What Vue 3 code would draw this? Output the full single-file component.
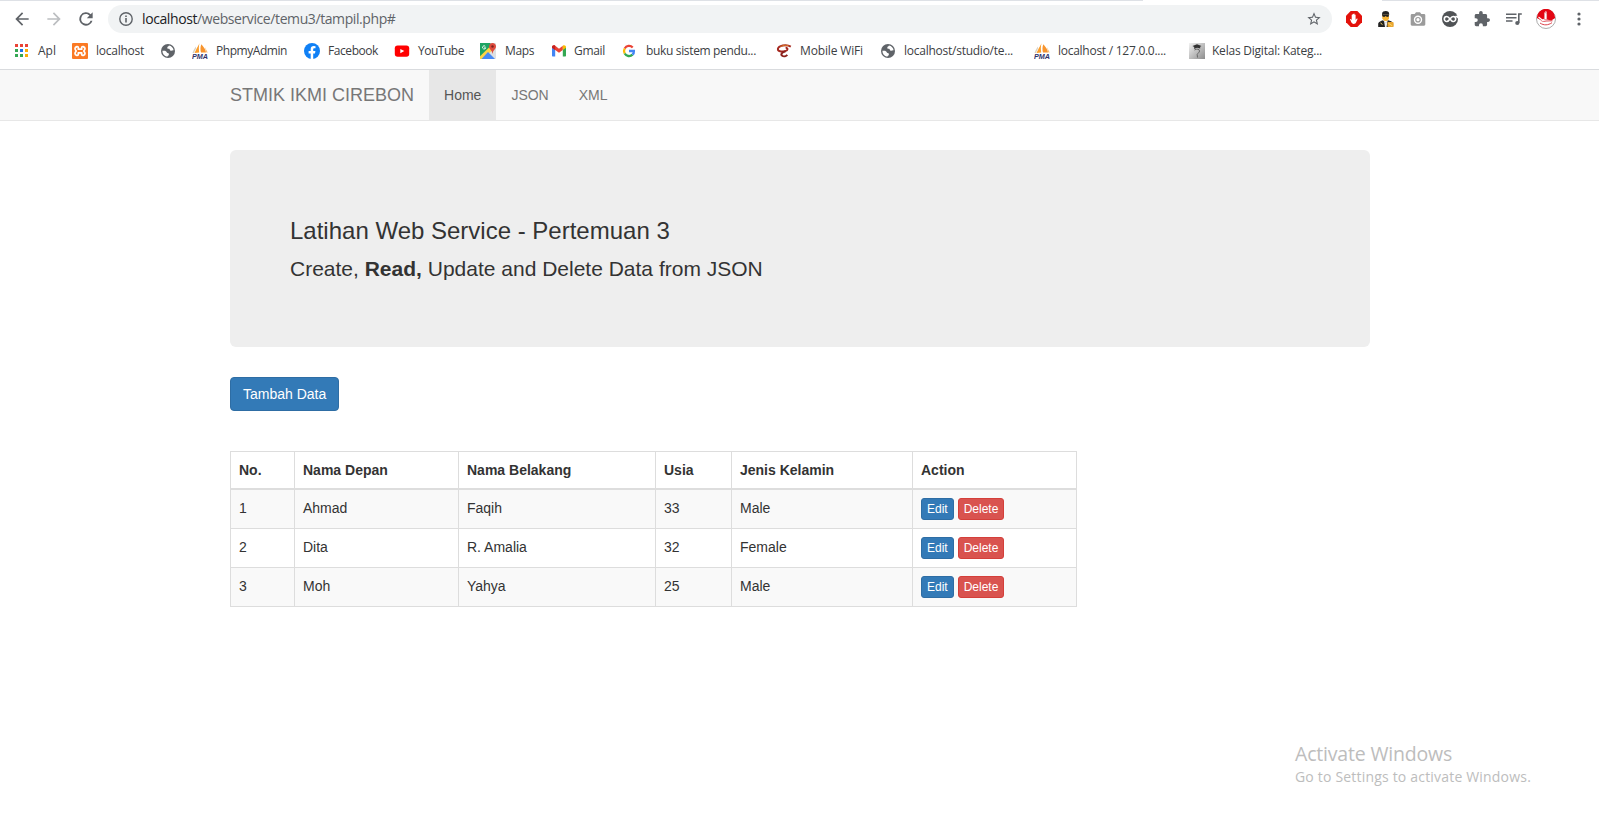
<script setup>
import { ref } from 'vue'

const ctx = document.createElement('canvas').getContext('2d')
function fit(text, width, size) {
  ctx.font = `${size}px "Open Sans"`
  const natural = ctx.measureText(text).width
  return { letterSpacing: (width - natural) / text.length + 'px', width: width + 'px' }
}

// gap: distance from the previous label; pad: space between icon and label
const bookmarks = [
  { icon: 'apps', label: 'Apl', gap: 13, w: 18, pad: 9 },
  { icon: 'xampp', label: 'localhost', gap: 16, w: 48, pad: 8 },
  { icon: 'globe', label: '', gap: 16, w: 0, pad: 0 },
  { icon: 'pma', label: 'PhpmyAdmin', gap: 16, w: 71, pad: 8 },
  { icon: 'fb', label: 'Facebook', gap: 17, w: 50, pad: 8 },
  { icon: 'yt', label: 'YouTube', gap: 16, w: 46, pad: 8 },
  { icon: 'maps', label: 'Maps', gap: 16, w: 29, pad: 9 },
  { icon: 'gmail', label: 'Gmail', gap: 17, w: 31, pad: 7 },
  { icon: 'google', label: 'buku sistem pendu...', gap: 16, w: 110, pad: 9 },
  { icon: 'wifi', label: 'Mobile WiFi', gap: 20, w: 63, pad: 8 },
  { icon: 'globe', label: 'localhost/studio/te...', gap: 17, w: 109, pad: 8 },
  { icon: 'pma', label: 'localhost / 127.0.0....', gap: 21, w: 108, pad: 8 },
  { icon: 'kelas', label: 'Kelas Digital: Kateg...', gap: 23, w: 110, pad: 7 }
]
const menu = ['Home', 'JSON', 'XML']
const active = ref('Home')
const columns = ['No.', 'Nama Depan', 'Nama Belakang', 'Usia', 'Jenis Kelamin', 'Action']
const rows = [
  ['1', 'Ahmad', 'Faqih', '33', 'Male'],
  ['2', 'Dita', 'R. Amalia', '32', 'Female'],
  ['3', 'Moh', 'Yahya', '25', 'Male']
]
</script>

<template>
  <div class="screen">
    <header class="chrome">
      <div class="tabline"><i></i><i></i></div>
      <div class="toolbar">
        <svg class="nav back" viewBox="0 0 24 24" fill="#5f6368"><path d="M20 11H7.8l5.6-5.6L12 4l-8 8 8 8 1.4-1.4L7.800 13H20z" /></svg>
        <svg class="nav forward" viewBox="0 0 24 24" fill="#bcbec1"><path d="M4 11h12.200l-5.600-5.600L12 4l8 8-8 8-1.400-1.400 5.600-5.600H4z" /></svg>
        <svg class="nav reload" viewBox="0 0 24 24" fill="#5f6368"><path d="M17.650 6.350A8 8 0 1 0 19.730 14h-2.300A5.800 5.800 0 1 1 12 6.100c1.600 0 3.100.7 4.100 1.800L13 11h7V4z" /></svg>
        <div class="omnibox">
          <svg class="info" viewBox="0 0 16 16"><circle cx="8" cy="8" r="6.200" fill="none" stroke="#5f6368" stroke-width="1.400" /><path d="M7.200 7h1.600v4.400H7.200zM7.200 4.400h1.600v1.500H7.200z" fill="#5f6368" /></svg>
          <span class="url" :style="fit('localhost/webservice/temu3/tampil.php#', 253.5, 14)"><b>localhost</b>/webservice/temu3/tampil.php#</span>
          <svg class="star" viewBox="0 0 24 24" fill="#5f6368"><path d="M22 9.240l-7.190-.62L12 2 9.190 8.630 2 9.240l5.460 4.730L5.820 21 12 17.270 18.180 21l-1.630-7.030zM12 15.400l-3.760 2.270 1-4.280-3.320-2.880 4.380-.38L12 6.100l1.710 4.040 4.380.38-3.320 2.880 1 4.280z" /></svg>
        </div>
        <div class="extensions">
          <svg viewBox="0 0 16 16"><path d="M4.700 0h6.600L16 4.700v6.600L11.300 16H4.700L0 11.300V4.700z" fill="#e3120b" /><path d="M4 8.300c.4-.6 1.100-.2 1.300.2l.4.7V4.100c0-.7.9-.7.9 0v3.200V3.200c0-.7 1-.7 1 0v4V3.100c0-.7 1-.7 1 0v4.200V4c0-.7 1-.7 1 0v5l1-1.200c.5-.5 1.200 0 .9.500l-1.500 3.200c-.5 1-1.200 1.400-2.200 1.400-1.400 0-2.100-.7-2.600-1.800z" fill="#fff" /></svg>
          <svg viewBox="0 0 16 16"><path d="M4.300 3.500h6.700v4.200L9.300 9.900H6.500L4.300 7.700z" fill="#f5b335" /><path d="M4.100 5V2.400C4.300.8 6 0 7.700 0c2.200 0 3.600 1 3.500 3.200v.6H5zM4.500 4h6.300v1.600L9 6 7.700 5l-1.500.9-1.700-.5zM.2 16v-3.500C.8 10.800 3 10 5 9.300l2.700 2.800 2.400-2.800c2 .5 4.500 1.200 5 3.200V16z" fill="#222" /><path d="M6 9.800l1.800 2 1.700-2L8.600 16H7z" fill="#eee" /><rect x="9.400" y="11" width="6.200" height="5" rx="1" fill="#eaa52e" /><path d="M10.500 12.300l3.800 2.500M2.500 12l2 1.600" stroke="#ffda69" /></svg>
          <svg viewBox="0 0 16 16"><path d="M2 3h2.700L6 1.300h4L11.300 3H14c.8 0 1.300.6 1.300 1.300v9c0 .8-.5 1.400-1.300 1.400H2c-.8 0-1.300-.6-1.300-1.400v-9C.7 3.600 1.200 3 2 3z" fill="#9b9b9b" /><circle cx="8" cy="8.700" r="3.500" fill="none" stroke="#fff" stroke-width="1.400" /><circle cx="8" cy="8.700" r="1.600" fill="#fff" /></svg>
          <svg viewBox="0 0 16 16"><circle cx="8" cy="8" r="8" fill="#505356" /><path d="M8 8C6.500 6 5.800 5.500 4.800 5.500a2.500 2.500 0 0 0 0 5C6 10.500 7 9.500 8 8s2-2.500 3.200-2.500a2.500 2.500 0 0 1 0 5C10.200 10.500 9.500 10 8 8z" fill="none" stroke="#fff" stroke-width="1.600" /><path d="M12.500 5l3.500-.5v3z" fill="#fff" /></svg>
          <svg viewBox="1 1 22 22" fill="#5f6368"><path d="M20.500 11H19V7c0-1.100-.9-2-2-2h-4V3.500a2.500 2.500 0 0 0-5 0V5H4c-1.100 0-2 .9-2 2v3.800h1.500a2.700 2.700 0 0 1 0 5.400H2V20c0 1.100.9 2 2 2h3.800v-1.500a2.700 2.700 0 0 1 5.400 0V22H17c1.100 0 2-.9 2-2v-4h1.500a2.500 2.500 0 0 0 0-5z" /></svg>
          <svg viewBox="0 0 16 16" fill="none" stroke="#5f6368"><path d="M0 3.300h10.500M0 6.700h10.500M0 10.100h6.500" stroke-width="1.500" /><path d="M12.800 12V3h3" stroke-width="1.600" /><circle cx="11.300" cy="12" r="2.100" fill="#5f6368" stroke="none" /></svg>
        </div>
        <svg class="avatar" viewBox="0 0 20 20"><circle cx="10" cy="10" r="9.500" fill="#fff" stroke="#888" stroke-width=".7" /><path d="M.8 9A9.200 9.200 0 0 1 19.200 9l-3.900 2.500-4.500-.9V3L9.800 1.900 8.200 4l-.3 6-3 1z" fill="#e30613" /><path d="M9.800 2.500L8.500 5v5.500h2.300V5z" fill="#fff" stroke="#d9303a" stroke-width=".5" /><path d="M3 9c2 3 4 4 7 3l6.500-.2M4 14c4 2.700 8 2.300 12-.3" fill="none" stroke="#d9303a" stroke-width=".9" /><path d="M2.500 8l5 4" stroke="#fff" stroke-width="1.200" /></svg>
        <svg class="kebab" viewBox="0 0 4 16" fill="#5f6368"><circle cx="2" cy="3" r="1.600" /><circle cx="2" cy="8" r="1.600" /><circle cx="2" cy="13" r="1.600" /></svg>
      </div>

      <nav class="bookmarks">
        <a v-for="(b, i) in bookmarks" :key="i" :style="{ marginLeft: b.gap + 'px', gap: b.pad + 'px' }">
          <svg v-if="b.icon === 'apps'" viewBox="0 0 16 16"><path d="M2 1h3v3H2zM7 1h3v3H7zM12 1h3v3h-3z" fill="#ea4335" /><path d="M2 6h3v3H2z" fill="#34a853" /><path d="M7 6h3v3H7z" fill="#1a73e8" /><path d="M12 6h3v3h-3zM12 11h3v3h-3z" fill="#fbad05" /><path d="M2 11h3v3H2zM7 11h3v3H7z" fill="#34a853" /></svg>
          <svg v-else-if="b.icon === 'xampp'" viewBox="0 0 16 16"><rect width="16" height="16" rx="1" fill="#fb7a24" /><path d="M6.300 4.300v1.900h3.400V4.300c0-1.100 3.300-.9 3.300 1.200 0 1-.5 1.500-1.200 2.500.7 1 1.200 1.500 1.200 2.500 0 2.100-3.300 2.300-3.300 1.200V9.800H6.300v1.900c0 1.100-3.300.9-3.300-1.200C3 9.500 3.500 9 4.200 8 3.500 7 3 6.500 3 5.500c0-2.100 3.300-2.300 3.300-1.200z" fill="none" stroke="#fff" stroke-width="1.700" stroke-linejoin="round" /></svg>
          <svg v-else-if="b.icon === 'globe'" viewBox="0 0 16 16"><circle cx="8" cy="8" r="7" fill="#5f6368" /><path d="M2.400 7.800c2.500-.5 4 .1 4.500 1.600.5 1 2.200.2 2 2-.1 1.300-1.400 1-1.600 2.300-3-.4-4.900-2.700-4.900-5.900zM9 2.500c-.2 1.100-1.600.7-1.700 1.900-.2 1.400.9 1.200 1.800 1.300.9.2.6 1.900 1.800 2.100 1 .2 1.600-.8 2.700-.5C13.300 4.900 11.500 3 9 2.500z" fill="#fff" /></svg>
          <svg v-else-if="b.icon === 'pma'" viewBox="0 0 16 16"><path d="M7.500.3C5.500 4 4 7 2.500 10l4.700-.6C6.800 6.200 6.600 3.300 7.500.3z" fill="#fb9d2a" /><path d="M9.300 1.200C12 4 13.700 7 14 9.500l-5 .1C8.200 7 8.300 4 9.300 1.200z" fill="#f7942d" /><path d="M4 3.500C2.500 5.500 1.300 7.500.5 10h1.400L4 5.500z" fill="#d9d3c5" /><path d="M12.800 4l2.900 5.500h-1.300z" fill="#f5b86b" /><text x="0" y="15.600" textLength="16" lengthAdjust="spacingAndGlyphs" font-size="6.500" font-weight="bold" font-style="italic" font-family="Liberation Sans" fill="#31336b">PMA</text></svg>
          <svg v-else-if="b.icon === 'fb'" viewBox="0 0 16 16"><circle cx="8" cy="8" r="8" fill="#1080f5" /><path d="M6.700 16v-5.600H4.600V8h2.100V6.300c0-2.200 1.100-3.300 3.100-3.300l1.700.2v2h-1c-1 0-1.300.5-1.300 1.200V8h2.200l-.4 2.400H9.200V16z" fill="#fff" /></svg>
          <svg v-else-if="b.icon === 'yt'" viewBox="0 0 16 16"><rect x=".8" y="2.400" width="14.400" height="11.400" rx="2.800" fill="#f00" /><path d="M6.300 5.900v4.400L10.300 8.100z" fill="#fff" /></svg>
          <svg v-else-if="b.icon === 'maps'" viewBox="0 0 16 16"><rect width="16" height="16" rx="1" fill="#dce0e2" /><path d="M0 0h10l3 3L0 16z" fill="#1fa463" /><path d="M0 13.200L9.500 4l3 3L3 16H0z" fill="#fdd545" /><path d="M1.500 16L8 9l7 7z" fill="#4789f4" /><path d="M12.500 0C14.500 0 16 1.500 16 3.500c0 2.700-3 3.500-3.300 7h-.4C12 7 9 6.200 9 3.500 9 1.500 10.500 0 12.500 0z" fill="#de4b3e" /><circle cx="12.500" cy="3.500" r="1.200" fill="#7c231d" /><path d="M5.300 3.300a1.600 1.600 0 1 0 .4 1.500H4.200" fill="none" stroke="#fff" stroke-width=".9" /></svg>
          <svg v-else-if="b.icon === 'gmail'" viewBox="0 0 16 16"><path d="M1 4h3.200v9.400H2c-.6 0-1-.4-1-1z" fill="#4285f4" /><path d="M11.800 4H15v8.400c0 .6-.4 1-1 1h-2.200z" fill="#34a853" /><path d="M1 4.200c0-1.700 1.900-2.400 3.200-1.400L8 5.700l3.800-2.900v4.100L8 9.800 4.200 6.900 1 4.700z" fill="#ea4335" /><path d="M11.800 2.800c1.300-1 3.200-.3 3.200 1.400v.5l-3.200 2.200z" fill="#fbbc04" /><path d="M1 4.200c0-1.700 1.900-2.400 3.200-1.400v4.100L1 4.700z" fill="#c5221f" /></svg>
          <svg v-else-if="b.icon === 'google'" viewBox="0 0 16 16" fill="none" stroke-width="2.300"><path d="M3.700 5.500A5 5 0 0 1 11.700 4.500" stroke="#ea4335" /><path d="M3.700 5.500a5 5 0 0 0 0 5" stroke="#fbbc05" /><path d="M3.700 10.500a5 5 0 0 0 7.800 1.200" stroke="#34a853" /><path d="M11.500 11.700C12.700 10.600 13 9.400 12.900 8H8" stroke="#4285f4" /></svg>
          <svg v-else-if="b.icon === 'wifi'" viewBox="0 0 16 16" fill="none"><path d="M14.800 3.600C10 .8 2.500 2.800 1.900 5.800c-.4 2.600 3.600 3.200 7.300 2.300 3.100-.8 3-3.400.4-3.300" stroke="#a5281f" stroke-width="1.900" /><path d="M9.500 8.300c-4 1-5 3.200-3.300 4.400 1.600 1.100 4 .4 5.100-.9" stroke="#8b211b" stroke-width="2" /><path d="M4.500 3.600C7 2.300 10 2 12.500 2.600" stroke="#e78b25" stroke-width=".8" /></svg>
          <svg v-else viewBox="0 0 16 16"><defs><linearGradient id="tile" x2="1" y2="1"><stop stop-color="#f2f2f2" /><stop offset="1" stop-color="#8c8c8c" /></linearGradient></defs><rect width="16" height="16" fill="url(#tile)" /><path d="M3.500 3l4.500-1.700L12.500 3l-1.300.8v1.700L8 4.800 5.200 6V4z" fill="#333" /><path d="M5.500 7C8 5.500 10.500 6 10.500 8c0 1.500-1.700 2-2.300 3.500l.3 3" fill="none" stroke="#666" /></svg>
          <span v-if="b.label" :style="fit(b.label, b.w, 12)">{{ b.label }}</span>
        </a>
      </nav>
    </header>

    <nav class="navbar">
      <div class="container">
        <a class="brand">STMIK IKMI CIREBON</a>
        <a v-for="m in menu" :key="m" class="item" :class="{ active: active === m }" @click="active = m">{{ m }}</a>
      </div>
    </nav>

    <main class="container content">
      <section class="jumbotron">
        <h3>Latihan Web Service - Pertemuan 3</h3>
        <p>Create, <b>Read,</b> Update and Delete Data from JSON</p>
      </section>
      <button class="btn primary">Tambah Data</button>
      <table>
        <colgroup><col class="c1" /><col class="c2" /><col class="c3" /><col class="c4" /><col class="c5" /><col class="c6" /></colgroup>
        <thead><tr><th v-for="c in columns" :key="c">{{ c }}</th></tr></thead>
        <tbody>
          <tr v-for="r in rows" :key="r[0]">
            <td v-for="(v, i) in r" :key="i">{{ v }}</td>
            <td><div class="actions"><button class="btn xs primary">Edit</button><button class="btn xs danger">Delete</button></div></td>
          </tr>
        </tbody>
      </table>
    </main>

    <aside class="watermark">
      <div class="big"><span :style="fit('Activate Windows', 157, 19.5)">Activate Windows</span></div>
      <div class="small"><span :style="fit('Go to Settings to activate Windows.', 236, 14)">Go to Settings to activate Windows.</span></div>
    </aside>
  </div>
</template>

<style>
body { margin: 0; background: #fff; overflow: hidden; }
</style>

<style scoped>
* { box-sizing: border-box; }
.screen { position: relative; height: 827px; overflow: hidden; font: 14px/20px "Liberation Sans", Arial, sans-serif; color: #333; }
svg { display: block; flex: none; }
.chrome { height: 70px; border-bottom: 1px solid #d9dbde; font-family: "Open Sans", "Noto Sans", sans-serif; }
.tabline { display: flex; justify-content: space-between; height: 1px; }
.tabline i { background: #dee1e6; width: 1143px; }
.tabline i + i { width: 217px; }
.toolbar { display: flex; align-items: center; height: 36px; }
.nav { width: 20px; height: 20px; margin-left: 12px; }
.omnibox { display: flex; align-items: center; width: 1224px; height: 28px; margin-left: 12px; border-radius: 14px; background: #f1f3f4; padding: 0 10px; }
.info { width: 16px; height: 16px; }
.url { margin-left: 8px; font-size: 14px; line-height: 20px; color: #5f6368; white-space: nowrap; }
.url b { font-weight: 400; color: #202124; }
.star { width: 16px; height: 16px; margin-left: auto; }
.extensions { display: flex; gap: 16px; margin-left: 14px; }
.extensions svg { width: 16px; height: 16px; }
.avatar { width: 20px; height: 20px; margin-left: 14px; }
.kebab { width: 4px; height: 16px; margin-left: 20.5px; }
.bookmarks { display: flex; align-items: center; height: 28px; }
.bookmarks a { display: flex; align-items: center; font-size: 12px; line-height: 16px; color: #3c4043; white-space: nowrap; }
.bookmarks svg { width: 16px; height: 16px; }
.container { width: 1140px; margin: 0 0 0 230px; }
.navbar { height: 51px; background: #f8f8f8; border-bottom: 1px solid #e7e7e7; }
.navbar .container { display: flex; }
.navbar a { color: #777; height: 50px; padding: 15px; }
.navbar .brand { font-size: 18px; padding-left: 0; }
.navbar .active { background: #e7e7e7; color: #555; }
.content { padding-top: 29px; }
.jumbotron { padding: 48px 60px; background: #eee; border-radius: 6px; margin-bottom: 30px; overflow: hidden; }
h3 { margin: 20px 0 10px; font-size: 24px; font-weight: 400; line-height: 26.4px; }
p { margin: 0 0 15px; font-size: 21px; line-height: 30px; }
.btn { display: block; border: 1px solid; border-radius: 4px; padding: 6px 12px; color: #fff; font: 14px/20px "Liberation Sans", Arial, sans-serif; }
.btn.primary { background: #337ab7; border-color: #2e6da4; }
.btn.danger { background: #d9534f; border-color: #d43f3a; }
.btn.xs { font-size: 12px; line-height: 18px; padding: 1px 5px; border-radius: 3px; }
table { margin-top: 40px; width: 847px; table-layout: fixed; border-collapse: collapse; }
.c1 { width: 64px; } .c2 { width: 164px; } .c3 { width: 197px; } .c4 { width: 76px; } .c5 { width: 181px; }
th, td { border: 1px solid #ddd; padding: 8px; text-align: left; vertical-align: top; }
th { border-bottom-width: 2px; }
tbody tr:nth-child(odd) { background: #f9f9f9; }
.actions { display: flex; gap: 4px; height: 22px; }
.watermark { position: absolute; left: 1295px; top: 740px; color: #bdbdbd; font-family: "Open Sans", sans-serif; white-space: nowrap; }
.big { font-size: 19.5px; line-height: 28px; }
.small { font-size: 14px; line-height: 18px; }
</style>
